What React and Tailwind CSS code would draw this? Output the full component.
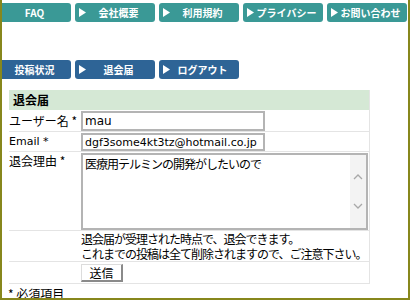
import React from 'react';

const Tri = () => (
    <svg width="7" height="9" viewBox="0 0 7 9" className="shrink-0">
        <polygon points="0,0 7,4.5 0,9" fill="#ffffff" />
    </svg>
);

function NavButton({ label, color }) {
    return (
        <div className={`w-[80px] h-[19px] shrink-0 rounded-[3px] ${color} flex items-center pl-1 pr-1 text-white text-[10px] font-bold leading-none`}>
            <Tri />
            <span className="flex-1 text-center">{label}</span>
        </div>
    );
}

function App() {
    const teal = 'bg-[#3a9996]';
    const blue = 'bg-[#2e6496]';
    return (
        <div className="w-[411px] h-[300px] overflow-hidden bg-white font-['Noto_Sans_CJK_JP',sans-serif] text-black">
            <div className="w-[410px] h-[300px] border-l-2 border-r-2 border-b-2 border-[#87871c] overflow-hidden">
                <div className="flex gap-1 pt-[3px] ml-[-11px]">
                    <NavButton label="FAQ" color={teal} />
                    <NavButton label="会社概要" color={teal} />
                    <NavButton label="利用規約" color={teal} />
                    <NavButton label="プライバシー" color={teal} />
                    <NavButton label="お問い合わせ" color={teal} />
                </div>
                <div className="flex gap-1 mt-[38px] ml-[-11px]">
                    <NavButton label="投稿状況" color={blue} />
                    <NavButton label="退会届" color={blue} />
                    <NavButton label="ログアウト" color={blue} />
                </div>

                <div className="mt-[11px] ml-[7px] w-[361px] border-r border-[#e4e4e4] text-[12px]">
                    <div className="h-[20px] bg-[#d5e8d5] pl-1 font-bold flex items-center">退会届</div>

                    <div className="flex items-center border-b border-[#e4e4e4] pt-[1px]">
                        <div className="w-[72px] whitespace-nowrap">ユーザー名 *</div>
                        <input
                            readOnly
                            value="mau"
                            className="w-[184px] h-[20px] border-2 border-[#b4b4b4] px-[2px] text-[12px] font-['DejaVu_Sans',sans-serif] outline-none"
                        />
                    </div>

                    <div className="flex items-center border-b border-[#e4e4e4] pt-[1px]">
                        <div className="w-[72px] font-['DejaVu_Sans',sans-serif] text-[11px]">Email *</div>
                        <input
                            readOnly
                            value="dgf3some4kt3tz@hotmail.co.jp"
                            className="w-[184px] h-[18px] border-2 border-[#b4b4b4] px-[2px] text-[11px] font-['DejaVu_Sans',sans-serif] outline-none"
                        />
                    </div>

                    <div className="flex items-start border-b border-[#e4e4e4] pt-[1px]">
                        <div className="w-[72px] leading-[14px] pt-[1px]">退会理由 *</div>
                        <div className="w-[287px] h-[77px] border-2 border-[#b4b4b4] flex">
                            <textarea
                                readOnly
                                value="医療用テルミンの開発がしたいので"
                                className="flex-1 resize-none outline-none px-[2px] pt-[1px] text-[12px] tracking-[-1px] leading-[15px]"
                            />
                            <div className="w-[16px] bg-[#f3f3f3] flex flex-col items-center justify-around py-2">
                                <svg width="10" height="6" viewBox="0 0 10 6">
                                    <polyline points="1,5 5,1 9,5" fill="none" stroke="#a8a8a8" strokeWidth="1.3" />
                                </svg>
                                <svg width="10" height="6" viewBox="0 0 10 6">
                                    <polyline points="1,1 5,5 9,1" fill="none" stroke="#a8a8a8" strokeWidth="1.3" />
                                </svg>
                            </div>
                        </div>
                    </div>

                    <div className="flex border-b border-[#e4e4e4]">
                        <div className="w-[72px]"></div>
                        <div className="tracking-[-1px] leading-[15px] whitespace-nowrap">
                            <p>退会届が受理された時点で、退会できます。</p>
                            <p>これまでの投稿は全て削除されますので、ご注意下さい。</p>
                        </div>
                    </div>

                    <div className="flex border-b border-[#e4e4e4] pt-[2px] pb-[1px]">
                        <div className="w-[72px]"></div>
                        <button className="w-[42px] h-[18px] bg-white border border-[#dcdcdc] border-r-2 border-b-2 border-r-[#8a8a8a] border-b-[#8a8a8a] text-[12px] leading-none">
                            送信
                        </button>
                    </div>
                </div>

                <p className="ml-[6px] mt-[3px] text-[12px] leading-[14px]">* 必須項目</p>
            </div>
        </div>
    );
}

export default App;
